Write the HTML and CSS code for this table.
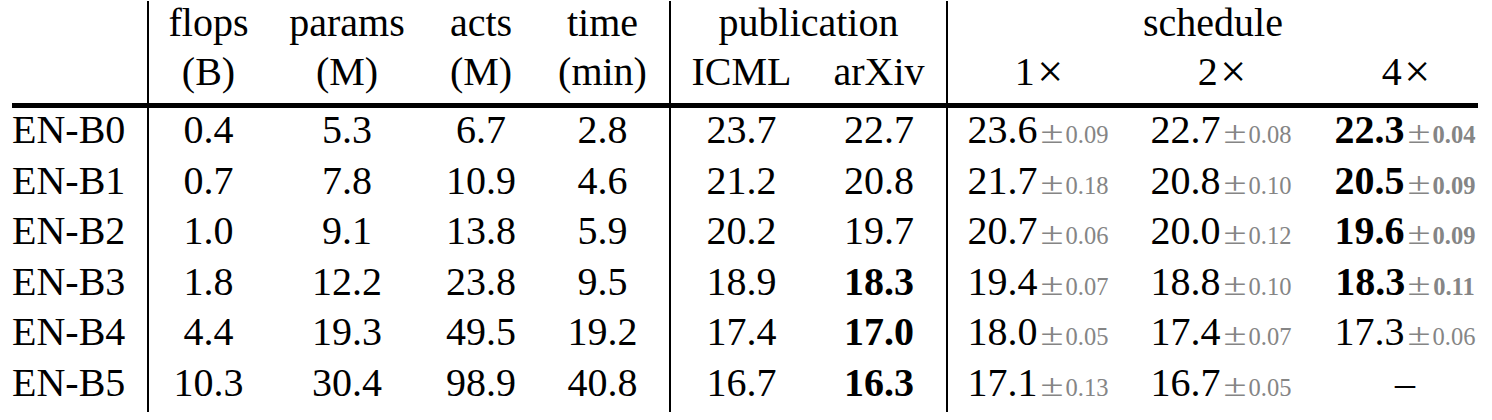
FILE: index.html
```html
<!DOCTYPE html>
<html>
<head>
<meta charset="utf-8">
<link rel="stylesheet" href="styles.css">
</head>
<body>
<table class="results">
  <colgroup>
    <col class="c-label">
    <col class="c-flops">
    <col class="c-params">
    <col class="c-acts">
    <col class="c-time">
    <col class="c-icml">
    <col class="c-arxiv">
    <col class="c-s1">
    <col class="c-s2">
    <col class="c-s4">
  </colgroup>
  <thead>
    <tr class="head-top">
      <th></th>
      <th class="vl">flops</th>
      <th>params</th>
      <th>acts</th>
      <th>time</th>
      <th class="vl" colspan="2">publication</th>
      <th class="vl sched" colspan="3">schedule</th>
    </tr>
    <tr class="head-bottom">
      <th></th>
      <th class="vl">(B)</th>
      <th>(M)</th>
      <th>(M)</th>
      <th>(min)</th>
      <th class="vl">ICML</th>
      <th>arXiv</th>
      <th class="vl">1<span class="times">×</span></th>
      <th class="mid">2<span class="times">×</span></th>
      <th>4<span class="times">×</span></th>
    </tr>
  </thead>
  <tbody>
    <tr>
      <td class="label">EN-B0</td>
      <td class="vl">0.4</td><td>5.3</td><td>6.7</td><td>2.8</td>
      <td class="vl">23.7</td><td>22.7</td>
      <td class="vl">23.6<span class="pm"><span class="pm-sign">±</span>0.09</span></td>
      <td class="mid">22.7<span class="pm"><span class="pm-sign">±</span>0.08</span></td>
      <td><b>22.3</b><span class="pm bold"><span class="pm-sign">±</span>0.04</span></td>
    </tr>
    <tr>
      <td class="label">EN-B1</td>
      <td class="vl">0.7</td><td>7.8</td><td>10.9</td><td>4.6</td>
      <td class="vl">21.2</td><td>20.8</td>
      <td class="vl">21.7<span class="pm"><span class="pm-sign">±</span>0.18</span></td>
      <td class="mid">20.8<span class="pm"><span class="pm-sign">±</span>0.10</span></td>
      <td><b>20.5</b><span class="pm bold"><span class="pm-sign">±</span>0.09</span></td>
    </tr>
    <tr>
      <td class="label">EN-B2</td>
      <td class="vl">1.0</td><td>9.1</td><td>13.8</td><td>5.9</td>
      <td class="vl">20.2</td><td>19.7</td>
      <td class="vl">20.7<span class="pm"><span class="pm-sign">±</span>0.06</span></td>
      <td class="mid">20.0<span class="pm"><span class="pm-sign">±</span>0.12</span></td>
      <td><b>19.6</b><span class="pm bold"><span class="pm-sign">±</span>0.09</span></td>
    </tr>
    <tr>
      <td class="label">EN-B3</td>
      <td class="vl">1.8</td><td>12.2</td><td>23.8</td><td>9.5</td>
      <td class="vl">18.9</td><td><b>18.3</b></td>
      <td class="vl">19.4<span class="pm"><span class="pm-sign">±</span>0.07</span></td>
      <td class="mid">18.8<span class="pm"><span class="pm-sign">±</span>0.10</span></td>
      <td><b>18.3</b><span class="pm bold"><span class="pm-sign">±</span>0.11</span></td>
    </tr>
    <tr>
      <td class="label">EN-B4</td>
      <td class="vl">4.4</td><td>19.3</td><td>49.5</td><td>19.2</td>
      <td class="vl">17.4</td><td><b>17.0</b></td>
      <td class="vl">18.0<span class="pm"><span class="pm-sign">±</span>0.05</span></td>
      <td class="mid">17.4<span class="pm"><span class="pm-sign">±</span>0.07</span></td>
      <td>17.3<span class="pm"><span class="pm-sign">±</span>0.06</span></td>
    </tr>
    <tr>
      <td class="label">EN-B5</td>
      <td class="vl">10.3</td><td>30.4</td><td>98.9</td><td>40.8</td>
      <td class="vl">16.7</td><td><b>16.3</b></td>
      <td class="vl">17.1<span class="pm"><span class="pm-sign">±</span>0.13</span></td>
      <td class="mid">16.7<span class="pm"><span class="pm-sign">±</span>0.05</span></td>
      <td>–</td>
    </tr>
  </tbody>
</table>
</body>
</html>
```

FILE: styles.css
```css
html, body {
  margin: 0;
  padding: 0;
  background: #ffffff;
}

body {
  font-family: "Liberation Serif", "Times New Roman", serif;
  font-size: 40px;
  color: #000000;
}

.results {
  margin: 1px 0 0 12px;
  border-collapse: separate;
  border-spacing: 0;
  table-layout: fixed;
  width: 1466px;
}

.c-label { width: 135px; }
.c-flops { width: 121px; }
.c-params { width: 158px; }
.c-acts { width: 110px; }
.c-time { width: 133px; }
.c-icml { width: 143px; }
.c-arxiv { width: 134px; }
.c-s1 { width: 182px; }
.c-s2 { width: 204px; }
.c-s4 { width: 146px; }

.results th,
.results td {
  font-weight: normal;
  text-align: center;
  white-space: nowrap;
  line-height: 43px;
  padding: 0;
  vertical-align: top;
}

.head-top th {
  padding-bottom: 6px;
}

.head-bottom th {
  padding-bottom: 10px;
  border-bottom: 5px solid #000000;
}

.results td {
  padding-bottom: 7.6px;
}

.results .vl {
  border-left: 2px solid #000000;
}

.results .label {
  text-align: left;
}

.results .mid {
  padding-right: 18px;
}

.results b {
  font-weight: bold;
}

.times {
  display: inline-block;
  margin-left: 4px;
  transform: scale(1.15);
}

.pm {
  font-size: 24.5px;
  line-height: 1;
  color: #858585;
}

.pm.bold {
  font-weight: bold;
}

.pm-sign {
  display: inline-block;
  width: 28px;
  text-align: center;
  font-size: 31px;
  font-weight: normal;
  transform: scaleX(1.35);
}
```
